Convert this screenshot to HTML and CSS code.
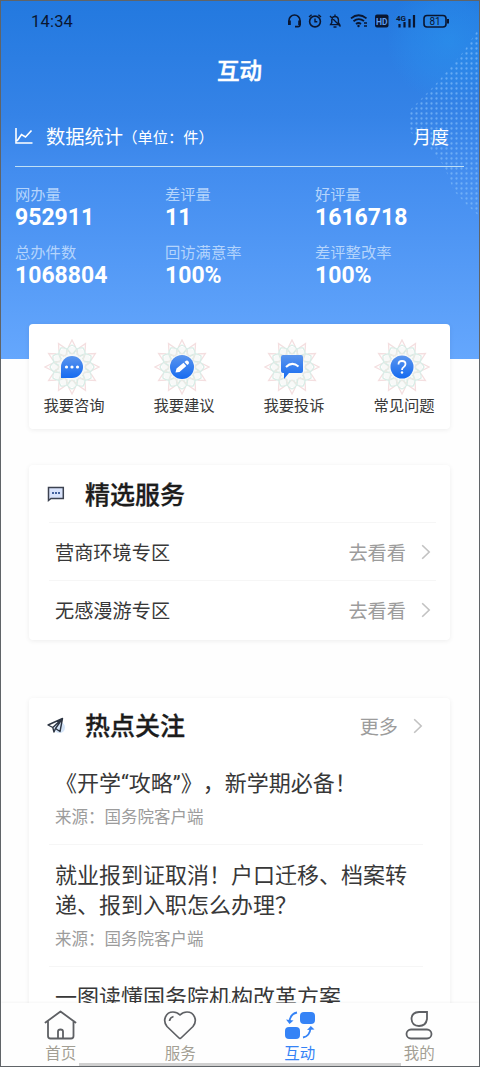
FILE: index.html
```html
<!DOCTYPE html>
<html lang="zh-CN">
<head>
<meta charset="utf-8">
<title>互动</title>
<link rel="stylesheet" href="styles.css">
</head>
<body>
<svg class="defs" width="0" height="0">
  <defs>
    <linearGradient id="blue" x1="0" y1="0" x2="0" y2="1"><stop offset="0" stop-color="#5b95ee"/><stop offset="1" stop-color="#166bf0"/></linearGradient>
    <radialGradient id="glow"><stop offset="0" stop-color="#2a9bf2" stop-opacity=".45"/><stop offset=".6" stop-color="#2a93f0" stop-opacity=".3"/><stop offset="1" stop-color="#2a93f0" stop-opacity="0"/></radialGradient>
    <pattern id="dots" width="5" height="5" patternUnits="userSpaceOnUse"><circle cx="2.5" cy="2.5" r="1.15" fill="#8cc4fb"/></pattern>
    <g id="petal">
      <path d="M-3.500 -20 L0 -27 L3.500 -20" stroke="#f4dfe0"/>
      <path d="M-5 -12 Q-7 -19 0 -22 Q7 -19 5 -12" stroke="#d8ece6"/>
      <path d="M-5 -17 L0 -13 L5 -17" stroke="#ebe9e4"/>
    </g>
    <symbol id="mandala" viewBox="-28 -28 56 56">
      <circle r="20" fill="#f8f9f8"/>
      <g fill="none" stroke-width="1.3">
        <use href="#petal"/><use href="#petal" transform="rotate(30)"/><use href="#petal" transform="rotate(60)"/>
        <use href="#petal" transform="rotate(90)"/><use href="#petal" transform="rotate(120)"/><use href="#petal" transform="rotate(150)"/>
        <use href="#petal" transform="rotate(180)"/><use href="#petal" transform="rotate(210)"/><use href="#petal" transform="rotate(240)"/>
        <use href="#petal" transform="rotate(270)"/><use href="#petal" transform="rotate(300)"/><use href="#petal" transform="rotate(330)"/>
      </g>
    </symbol>
    <symbol id="chevron" viewBox="0 0 10 16"><path d="M1.2 1.2 L8.2 8 L1.2 14.8" fill="none" stroke="#c2c2c2" stroke-width="1.6"/></symbol>
  </defs>
</svg>

<div class="phone">
  <header class="hero">
    <svg class="hero-art" width="90" height="220" viewBox="0 0 90 220">
      <circle cx="60" cy="40" r="62" fill="url(#glow)"/>
      <path d="M88 30 L75 50 L60 68 L45 85 L30 100 L20 110 V130 L40 146 L55 165 L65 190 L78 204 L90 215 V30 Z" fill="url(#dots)" opacity=".6"/>
    </svg>

    <div class="status">
      <span class="clock">14:34</span>
      <svg class="status-icons" width="162" height="16" viewBox="0 0 162 16" fill="none" stroke="#0a1630" stroke-width="1.6">
        <path d="M2 10 V7.5 A5.5 5.5 0 0 1 13 7.5 V12 Q13 13.6 11 13.6 H8"/>
        <path d="M2.4 7.5 V12 M12.6 7.5 V12" stroke-width="2.8"/>
        <circle cx="28" cy="8.5" r="5.4"/><path d="M28 5.5 V8.7 H30.3 M22 4 L24.6 1.8 M34 4 L31.4 1.8" stroke-width="1.4"/>
        <path d="M43.6 11.6 H52.6 L51.4 9.5 V6.5 Q51 3.5 48 3.5 Q45 3.5 44.8 6.5 V9.5 Z M48 1.5 V3.5 M46.5 14 H49.5 M43 3 L53.5 13.5" stroke-width="1.4"/>
        <path d="M64 5.400 Q71.500 -1 79.500 5.400 M66.500 8.300 Q71.500 4 77 8 M69 11 Q71.500 9 74 11" stroke-width="1.800"/>
        <circle cx="71.500" cy="13" r="1.200" fill="#0a1630" stroke="none"/><path d="M77 10 H80 M77 13 H80" stroke-width="1.500"/>
        <rect x="88" y="1.500" width="13.500" height="13" rx="2" fill="#0a1630" stroke="none"/>
        <text x="94.700" y="11.500" class="hd">HD</text>
        <text x="114" y="7.500" class="net">4G</text>
        <path d="M112.500 11 V14.500 M117.500 9 V14.500 M122.500 6 V14.500 M127 2 V14.500" stroke-width="2.200"/>
        <rect x="137" y="2.500" width="22" height="11.500" rx="3"/><path d="M161 6 V10.500" stroke-width="2"/>
        <text x="148" y="12" class="pct">81</text>
      </svg>
    </div>

    <h1 class="title">互动</h1>

    <div class="stat-head">
      <svg width="18" height="16" viewBox="0 0 18 16" fill="none" stroke="#fff" stroke-width="1.6"><path d="M1 0 V15 H17.500 M2 13 L6.500 6.500 L10.500 9 L16.500 2.500"/></svg>
      <span class="stat-title">数据统计</span><span class="unit">（单位：件）</span>
      <span class="period">月度</span>
    </div>

    <dl class="stats">
      <div><dt>网办量</dt><dd>952911</dd></div>
      <div><dt>差评量</dt><dd>11</dd></div>
      <div><dt>好评量</dt><dd>1616718</dd></div>
      <div><dt>总办件数</dt><dd>1068804</dd></div>
      <div><dt>回访满意率</dt><dd>100%</dd></div>
      <div><dt>差评整改率</dt><dd>100%</dd></div>
    </dl>
  </header>

  <main class="content">
    <nav class="card actions">
      <a class="action">
        <svg width="56" height="56" viewBox="-28 -28 56 56"><use href="#mandala" x="-28" y="-28" width="56" height="56"/><path d="M-11 11 V0 A11 11 0 1 1 0 11 Z" fill="url(#blue)"/><g fill="#fff"><circle cx="-5.500" cy="0" r="1.600"/><circle r="1.600"/><circle cx="5.500" cy="0" r="1.600"/></g></svg>
        <span>我要咨询</span>
      </a>
      <a class="action">
        <svg width="56" height="56" viewBox="-28 -28 56 56"><use href="#mandala" x="-28" y="-28" width="56" height="56"/><circle r="12" fill="url(#blue)"/><path d="M-6.500 5.500 L-5.500 1.500 L1.500 -4.200 L4.300 -1 L-2.500 5 Z M2.500 -5 L4 -6.200 Q5.500 -7 6.700 -5.300 Q7.500 -4 6.500 -3 L5.300 -1.900 Z" fill="#fff"/></svg>
        <span>我要建议</span>
      </a>
      <a class="action">
        <svg width="56" height="56" viewBox="-28 -28 56 56"><use href="#mandala" x="-28" y="-28" width="56" height="56"/><path d="M-9 -12 H9 Q11 -12 11 -10 V4 Q11 6 9 6 H-3 L-8 12 V6 H-9 Q-11 6 -11 4 V-10 Q-11 -12 -9 -12 Z" fill="url(#blue)"/><path d="M-6 0 Q0 -6 6.500 -.5" fill="none" stroke="#fff" stroke-width="2"/></svg>
        <span>我要投诉</span>
      </a>
      <a class="action">
        <svg width="56" height="56" viewBox="-28 -28 56 56"><use href="#mandala" x="-28" y="-28" width="56" height="56"/><circle r="11.500" fill="url(#blue)"/><path d="M-3.500 -2.500 Q-3.500 -6 0 -6 Q3.500 -6 3.500 -3 Q3.500 -1 1.500 .2 Q0 1 0 3" fill="none" stroke="#fff" stroke-width="1.800"/><circle cy="5.500" r="1.200" fill="#fff"/></svg>
        <span>常见问题</span>
      </a>
    </nav>

    <section class="card services">
      <div class="card-head">
        <svg width="18" height="18" viewBox="0 0 18 18"><path d="M1.500 2.500 H16.300 V13.500 H4 L1.500 15.500 Z" fill="#d9e3fb" stroke="#3c4250" stroke-width="1.500"/><path d="M5 8 H13" stroke="#44639f" stroke-width="1.800" stroke-dasharray="2 1"/></svg>
        <h2>精选服务</h2>
      </div>
      <a class="row"><span>营商环境专区</span><span class="go">去看看</span><svg width="10" height="16"><use href="#chevron"/></svg></a>
      <a class="row"><span>无感漫游专区</span><span class="go">去看看</span><svg width="10" height="16"><use href="#chevron"/></svg></a>
    </section>

    <section class="card hot">
      <div class="card-head">
        <svg width="18" height="18" viewBox="0 0 18 18"><circle cx="12.500" cy="10.500" r="5.500" fill="#d5e5f8"/><path d="M1 8 L15.500 1.500 L13 14.500 L8.500 11.500 L7 15 L5.800 10.500 Z M5.800 10.500 L15.500 1.500 L8.500 11.500" fill="none" stroke="#2d3542" stroke-width="1.400" stroke-linejoin="round"/></svg>
        <h2>热点关注</h2>
        <span class="go more">更多</span><svg width="10" height="16"><use href="#chevron"/></svg>
      </div>
      <article><h3>《开学“攻略”》，新学期必备！</h3><p>来源：国务院客户端</p></article>
      <article><h3>就业报到证取消！户口迁移、档案转递、报到入职怎么办理？</h3><p>来源：国务院客户端</p></article>
      <article><h3>一图读懂国务院机构改革方案</h3></article>
    </section>
  </main>

  <nav class="tabs">
    <a class="tab">
      <svg width="34" height="32" viewBox="0 0 34 32" fill="none" stroke="#5e6064" stroke-width="1.800" stroke-linejoin="round" stroke-linecap="round"><path d="M1.500 13.500 L16.500 2.500 L31.500 13.500 M4 12 V27 Q4 29.500 6.500 29.500 H27 Q29.500 29.500 29.500 27 V12 M14 29 V22.500 Q14 20.500 16.500 20.500 Q19 20.500 19 22.500 V29"/></svg>
      <span>首页</span>
    </a>
    <a class="tab">
      <svg width="34" height="32" viewBox="0 0 34 32" fill="none" stroke="#5e6064" stroke-width="1.700" stroke-linejoin="round"><path d="M16 29 L4 17.500 C-1 11 3 3 10 3 Q14 3 17 6 Q20 3 24 3 C31 3 35 11 30 17.500 L18 29 Q17 30 16 29 Z"/><path d="M6.500 12 Q7 8.500 10.500 7.500"/></svg>
      <span>服务</span>
    </a>
    <a class="tab active">
      <svg width="34" height="32" viewBox="0 0 34 32" fill="#3583f6"><rect x="17" y="3" width="15" height="12" rx="4"/><rect x="2" y="18" width="15" height="12" rx="4"/><path d="M14 3.500 Q7 5 6.500 13 M20 28.500 Q27 27 27.500 19" fill="none" stroke="#3583f6" stroke-width="1.800"/><path d="M3 10.500 L6.500 15 L10.500 11.500 Z M24 21 L27.800 17 L31.500 20.500 Z"/></svg>
      <span>互动</span>
    </a>
    <a class="tab">
      <svg width="34" height="32" viewBox="0 0 34 32" fill="none" stroke="#5e6064" stroke-width="1.800"><path d="M25 3 H17 Q9.500 3.500 9.500 10 Q10 17 17 17 Q24 17 25 10 Z"/><rect x="4.500" y="20.500" width="25" height="9" rx="4.500"/></svg>
      <span>我的</span>
    </a>
    <div class="home-bar"></div>
  </nav>
</div>
</body>
</html>
```
FILE: styles.css
```css
* { box-sizing: border-box; }

body {
  margin: 0;
  font-family: Roboto, "Noto Sans CJK SC", sans-serif;
  text-spacing-trim: space-all;
  color: #383838;
}

h1, h2, h3, p, dl, dd { margin: 0; }

svg { display: block; flex: none; }

.defs { position: absolute; }

.phone {
  width: 480px;
  height: 1067px;
  overflow: hidden;
  display: flex;
  flex-direction: column;
  position: relative;
  border: 1px solid #606468;
  background: #fefefe;
}

/* Blue header */
.hero {
  position: relative;
  flex: none;
  height: 358px;
  padding: 0 15px 0 14px;
  background: linear-gradient(#2379df, #3583e7 32%, #438def 48%, #65a7fd);
  color: #fff;
}

.hero-art { position: absolute; right: 0; top: 0; }

.status {
  position: relative;
  display: flex;
  justify-content: space-between;
  align-items: center;
  height: 40px;
  padding: 0 15px 0 16px;
}

.clock { font-size: 16.5px; letter-spacing: .2px; color: #0a1630; }

.status-icons text { stroke: none; fill: #0a1630; text-anchor: middle; font-weight: 700; }
.status-icons .hd { font-size: 8.5px; fill: #5b9cf0; }
.status-icons .net { font-size: 8px; }
.status-icons .pct { font-size: 10px; font-weight: 400; }

.title {
  position: relative;
  height: 60px;
  line-height: 60px;
  text-align: center;
  font-size: 22.5px;
  font-weight: 500;
  -webkit-text-stroke: .5px;
}

.stat-head {
  position: relative;
  display: flex;
  align-items: center;
  height: 66px;
  padding-top: 5px;
  border-bottom: 1px solid #bfe0f6;
}

.stat-title { margin-left: 13px; font-size: 19.3px; }
.unit { margin-left: -1px; font-size: 15.3px; }
.period { margin-left: auto; margin-right: 15px; font-size: 18px; }

.stats {
  display: grid;
  grid-template-columns: repeat(3, 150px);
  grid-auto-rows: 58px;
  padding-top: 17px;
}

dt { font-size: 15.3px; line-height: 22px; color: #b4d4fc; }
dd { font-size: 23px; line-height: 24px; font-weight: 700; }

/* Cards */
.content { position: relative; flex: none; padding: 0 29px 0 28px; margin-top: -35px; }

.card {
  background: #fff;
  border-radius: 4px;
  box-shadow: 0 1px 5px rgba(0, 0, 0, .07);
}

.actions { display: flex; height: 105px; }

.action {
  flex: 0 0 110px;
  display: flex;
  flex-direction: column;
  align-items: center;
  padding-top: 15px;
  font-size: 15.3px;
}
.action:first-child { flex-basis: 100px; padding-right: 10px; }
.action svg { margin-right: 5px; }
.action span { line-height: 22px; white-space: nowrap; }

.services { margin-top: 36px; height: 175px; }

.card-head { display: flex; align-items: center; height: 57px; padding: 1px 27px 0 18px; }
.card-head h2 {
  margin-left: 20px;
  padding-top: 3px;
  font-size: 25px;
  font-weight: 500;
  line-height: 36px;
  color: #1c1c1c;
  -webkit-text-stroke: .3px;
}

.row {
  display: flex;
  align-items: center;
  height: 58px;
  margin: 0 14px 0 20px;
  padding: 0 5px 0 6px;
  border-top: 1px solid #f6f6f6;
  font-size: 19.2px;
}

.go { margin-left: auto; margin-right: 15px; font-size: 19.2px; color: #9c9c9c; }

.hot { margin-top: 58px; height: 400px; }
.hot .card-head { height: 55px; padding-top: 0; }

article {
  margin: 0 27px 0 20px;
  padding: 16px 0 14px 6px;
  border-bottom: 1px solid #f6f6f6;
}
article h3 { font-size: 22px; font-weight: 400; line-height: 30px; }
article p { padding-top: 7px; font-size: 16.5px; line-height: 24px; color: #9c9c9c; }

/* Bottom navigation */
.tabs {
  position: absolute;
  left: 0;
  right: 0;
  bottom: 0;
  display: flex;
  height: 63px;
  background: #fefefe;
  box-shadow: 0 -1px 2px rgba(0, 0, 0, .04);
}

.tab {
  flex: 1;
  display: flex;
  flex-direction: column;
  align-items: center;
  padding-top: 6px;
  font-size: 15.5px;
  line-height: 26px;
  color: #a39f94;
}
.tab.active { color: #3583f6; }

.home-bar { position: absolute; left: 78px; bottom: 0; width: 322px; height: 3px; background: #d0d0d0; }
```
